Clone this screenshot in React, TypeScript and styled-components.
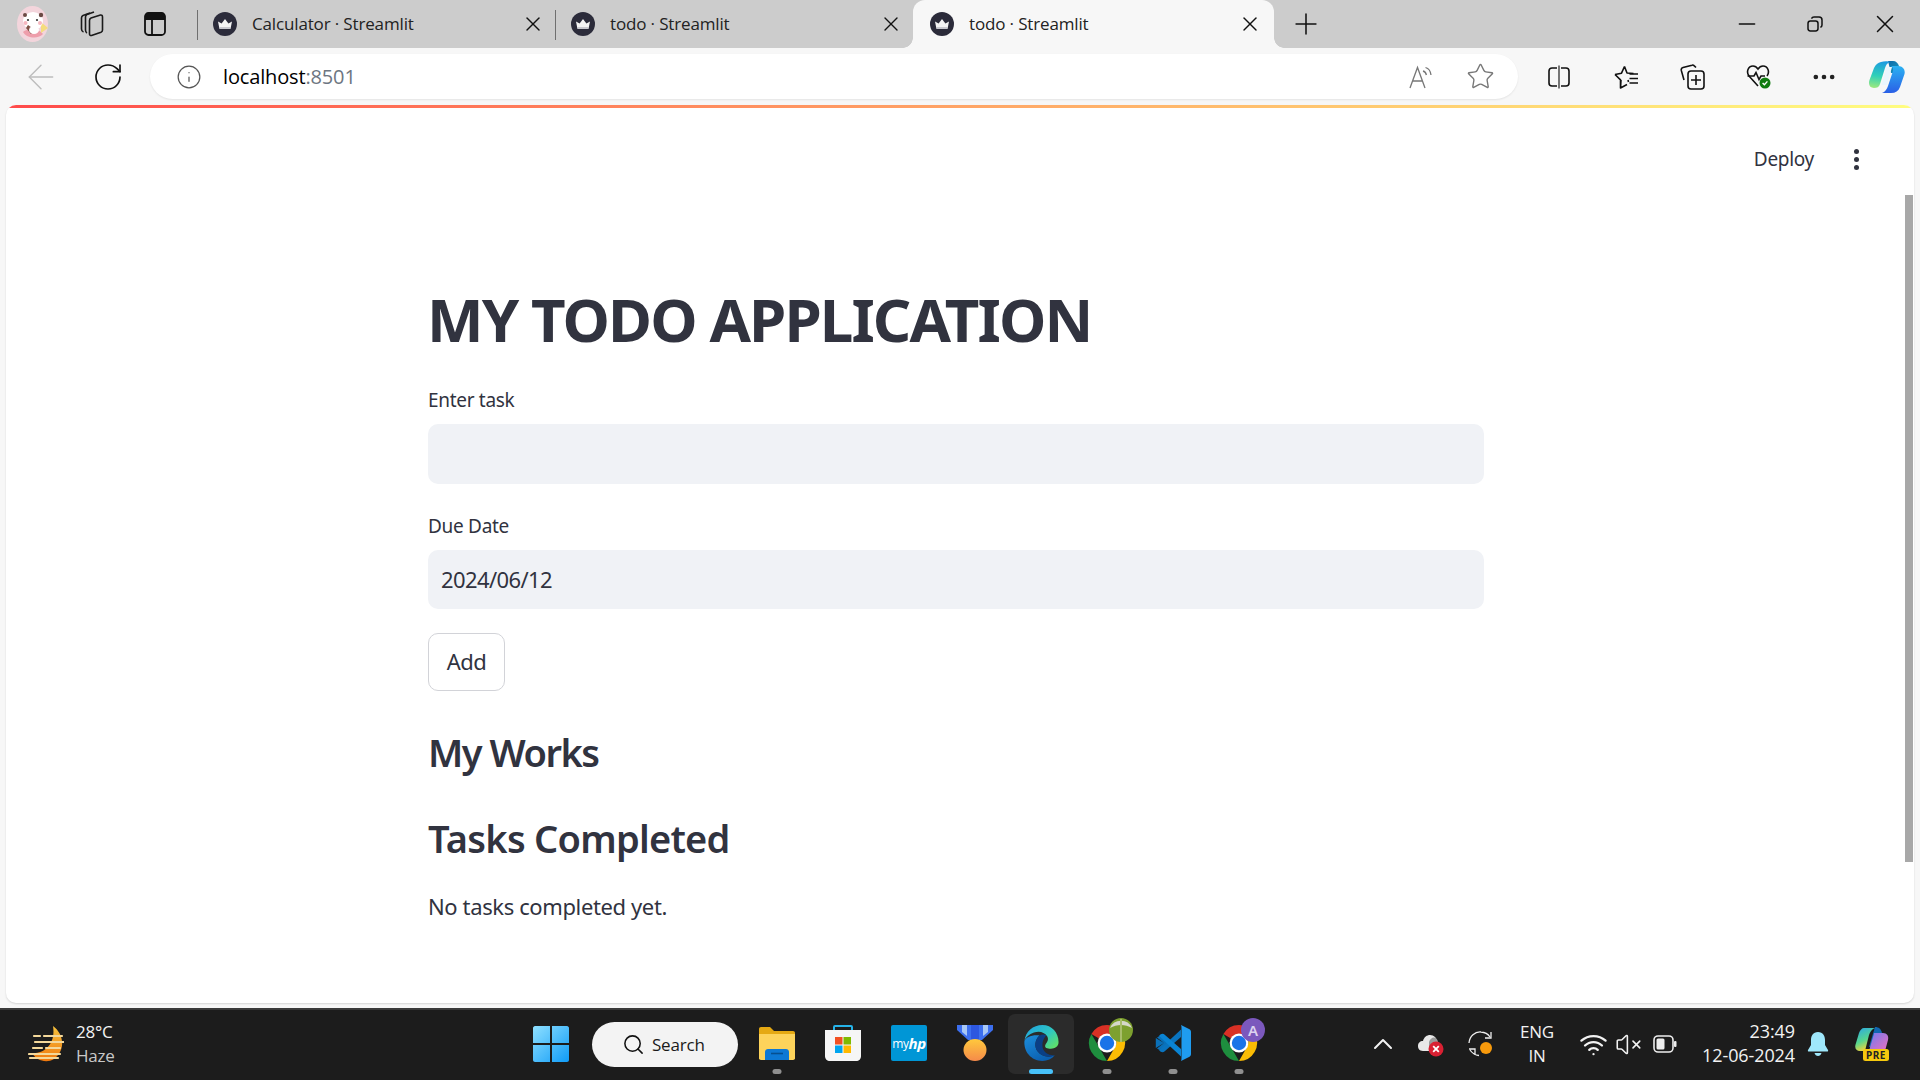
import React from 'react'
import styled, { createGlobalStyle } from 'styled-components'
import { ArrowLeft, ChevronUp, Info, Minus, MoreHorizontal, Plus, RotateCw, Search, Star, VolumeX, Wifi, X } from 'lucide-react'

const GlobalStyle = createGlobalStyle`
  html, body {
    margin: 0;
    padding: 0;
    overflow: hidden;
    background: #f7f7f7;
  }
  * {
    box-sizing: border-box;
  }
`

const StreamlitFavicon = () => (
  <svg width="24" height="24" viewBox="0 0 24 24">
    <circle cx="12" cy="12" r="12" fill="#2b2b3a" />
    <path d="M5 9.5 L8.6 11.6 L12 7 L15.4 11.6 L19 9.5 L17.6 16.5 H6.4 Z" fill="#f4f4f4" />
    <path d="M6.2 15 H17.8 L17.5 17 H6.5 Z" fill="#c9c9cf" />
  </svg>
)

const Avatar = () => (
  <svg width="31" height="36" viewBox="0 0 31 36">
    <ellipse cx="15.5" cy="18" rx="15.5" ry="18" fill="#f3d5dc" />
    <path d="M6 26 C10 22 22 22 26 28 C22 33 10 33 6 26Z" fill="#ee9eab" />
    <path d="M24 16 L31 22 L24 27Z" fill="#f5dc7d" />
    <ellipse cx="16" cy="15" rx="10" ry="9" fill="#fff" />
    <circle cx="24" cy="9" r="2.2" fill="#6b4a44" />
    <circle cx="8" cy="9" r="2" fill="#6b4a44" />
    <circle cx="11" cy="14" r="1.1" fill="#333" />
    <circle cx="20" cy="14" r="1.1" fill="#333" />
    <circle cx="8.5" cy="17" r="2" fill="#f7b7c0" />
    <circle cx="23" cy="17" r="2" fill="#f7b7c0" />
    <path d="M11 19 L18 24 L14 28 L9 22Z" fill="#7e4f44" />
    <ellipse cx="17" cy="24" rx="5" ry="4" fill="#fff" />
  </svg>
)

const WorkspacesIcon = () => (
  <svg width="24" height="28" viewBox="0 0 24 28" fill="none" stroke="#1a1a1a" strokeWidth="1.6" strokeLinejoin="round">
    <path d="M10 3 L3 5.5 C1.8 6 1.5 7 1.5 8 V19 C1.5 20.5 2 21.5 3.5 22" />
    <path d="M14 2 L7 4.5 C5.8 5 5.5 6 5.5 7 V20 C5.5 21.5 6 22.5 7 23" />
    <path d="M11 8 L20.5 5 C21.8 4.8 22.5 5.5 22.5 7 V20 C22.5 21 22 21.8 21 22.2 L11.5 25.5 C10.2 25.8 9.5 25 9.5 24 V10.5 C9.5 9.3 10 8.4 11 8Z" />
  </svg>
)

const TabLayoutIcon = () => (
  <svg width="22" height="24" viewBox="0 0 22 24">
    <rect x="1" y="1" width="20" height="22" rx="3.5" fill="none" stroke="#111" strokeWidth="1.8" />
    <path d="M1 4.5 C1 2.5 2.5 1 4.5 1 H17.5 C19.5 1 21 2.5 21 4.5 V8 H1Z" fill="#111" />
    <path d="M8 8 V23" stroke="#111" strokeWidth="1.8" />
  </svg>
)

const RestoreIcon = () => (
  <svg width="16" height="16" viewBox="0 0 16 16" fill="none" stroke="#111" strokeWidth="1.5">
    <rect x="1" y="5" width="10" height="10" rx="2.4" />
    <path d="M4.5 2.6 C5 1.5 5.8 1 7 1 H12 C13.8 1 15 2.2 15 4 V9 C15 10.2 14.4 11 13.4 11.4" />
  </svg>
)

const ReadAloudIcon = () => (
  <svg width="24" height="24" viewBox="0 0 24 24" fill="none" stroke="#777" strokeWidth="1.3">
    <path d="M1 23 L8.5 2.5 L16 23 M3.8 16 H13.2" />
    <path d="M14 6 C16 6.5 17 8 17.4 10 M16.5 2.5 C20 3.5 21.6 6.5 22 10" />
  </svg>
)

const SplitIcon = () => (
  <svg width="24" height="24" viewBox="0 0 24 24" fill="none" stroke="#111" strokeWidth="1.6">
    <path d="M10 3 H5 C3.2 3 2 4.2 2 6 V18 C2 19.8 3.2 21 5 21 H10" />
    <path d="M14 3 H19 C20.8 3 22 4.2 22 6 V18 C22 19.8 20.8 21 19 21 H14" />
    <path d="M12 0.5 V23.5" stroke="#555" />
  </svg>
)

const FavoritesIcon = () => (
  <svg width="25" height="24" viewBox="0 0 25 24" fill="none" stroke="#111" strokeWidth="1.6" strokeLinejoin="round">
    <path d="M10.5 1.5 L13 8 L19.5 8.5 M14 15 L14.5 17 M7 15 L6.5 23 L13 19.5 M1 9.5 L7.5 8.2 L10.5 1.5 M1 9.5 L6.5 14.8 L6.5 23" />
    <path d="M15.5 9 H24 M15.5 13.5 H24 M15.5 18 H24" />
  </svg>
)

const CollectionsIcon = () => (
  <svg width="25" height="26" viewBox="0 0 25 26" fill="none" stroke="#111" strokeWidth="1.6">
    <path d="M16 3.5 L14 1.6 C13.4 1 12.6 1 12 1.2 L3 3.6 C1.6 4 1 5 1.3 6.4 L4 16" />
    <rect x="8" y="7" width="16" height="18" rx="3" />
    <path d="M16 11 V21 M11 16 H21" />
  </svg>
)

const HealthIcon = () => (
  <svg width="26" height="26" viewBox="0 0 26 26">
    <path d="M12 22 L3 12 C0 8 2 2 7 2 C9.5 2 11 3.5 12 5 C13 3.5 14.5 2 17 2 C22 2 24 8 21 12" fill="none" stroke="#111" strokeWidth="1.6" />
    <path d="M1.5 12 H8 L10 8.5 L13 15.5 L15 12 H19" fill="none" stroke="#111" strokeWidth="1.6" />
    <circle cx="19" cy="19" r="5.5" fill="#107c10" />
    <path d="M16.6 19 L18.4 20.8 L21.4 17.4" fill="none" stroke="#fff" strokeWidth="1.4" />
  </svg>
)

const CopilotLogo = () => (
  <svg width="36" height="32" viewBox="0 0 36 32">
    <defs>
      <linearGradient id="copilotLeft" x1="0.5" y1="0" x2="0.4" y2="1">
        <stop offset="0" stopColor="#1c9be0" />
        <stop offset="0.55" stopColor="#2fd0b8" />
        <stop offset="1" stopColor="#9be87e" />
      </linearGradient>
      <linearGradient id="copilotRight" x1="0.5" y1="0" x2="0.5" y2="1">
        <stop offset="0" stopColor="#2bb2f2" />
        <stop offset="1" stopColor="#2a5fe6" />
      </linearGradient>
      <linearGradient id="copilotTop" x1="0" y1="0" x2="1" y2="1">
        <stop offset="0" stopColor="#0d6aa8" />
        <stop offset="1" stopColor="#1d9fc4" />
      </linearGradient>
    </defs>
    <path d="M19 0 H24 C27 0 29 2 30 5 L33 12 H22Z" fill="url(#copilotTop)" />
    <path d="M12 1 C15 0 19 0 21 1 C18 2 17 4 16 7 L11 23 C10 26 8 27 5 27 C1 27 -1 24 0.5 19 L5 7 C6.5 3.5 9 2 12 1Z" fill="url(#copilotLeft)" />
    <path d="M22 5 H29 C34 5 36.5 9 35.5 13 L31 26 C29.5 30 26.5 32 22 32 H13 C16 31 18 28 19 25 L24 10 C24.5 8 23.5 6 22 5Z" fill="url(#copilotRight)" />
    <path d="M17.5 6 H23 L18 24 H12.5Z" fill="#eaf6fd" />
  </svg>
)

const WeatherIcon = () => (
  <svg width="36" height="36" viewBox="0 0 36 36">
    <defs>
      <linearGradient id="weatherFill" x1="0" y1="0" x2="0" y2="1">
        <stop offset="0" stopColor="#f8c33c" />
        <stop offset="1" stopColor="#f0780d" />
      </linearGradient>
    </defs>
    <path d="M25 0 C36 8 38 24 26 33 C18 38 8 34 4 27 C16 28 28 18 25 0Z" fill="url(#weatherFill)" />
    <path d="M6 10 H12 M16 10 H34 M7 16 H36 M5 22 H14 M18 22 H32 M1 28 H32 M2 32 H30" stroke="#f4d89a" strokeWidth="2.2" strokeLinecap="round" />
  </svg>
)

const WindowsLogo = () => (
  <svg width="36" height="36" viewBox="0 0 36 36">
    <defs>
      <linearGradient id="winFill" x1="0" y1="0" x2="1" y2="1">
        <stop offset="0" stopColor="#8fe0ff" />
        <stop offset="1" stopColor="#0f9bf7" />
      </linearGradient>
    </defs>
    <path d="M0 2 C0 1 1 0 2 0 H17 V17 H0Z M19 0 H34 C35 0 36 1 36 2 V17 H19Z M0 19 H17 V36 H2 C1 36 0 35 0 34Z M19 19 H36 V34 C36 35 35 36 34 36 H19Z" fill="url(#winFill)" />
  </svg>
)

const FolderIcon = () => (
  <svg width="36" height="36" viewBox="0 0 36 36">
    <path d="M0 4 C0 2.8 .8 2 2 2 H11 L15 6 H34 C35.2 6 36 6.8 36 8 V34 H0Z" fill="#e5a913" />
    <path d="M0 9 H36 V33 C36 34.2 35.2 35 34 35 H2 C.8 35 0 34.2 0 33Z" fill="#fdd35b" />
    <path d="M6 35 V27 C6 25 7.5 24 9 24 H27 C28.5 24 30 25 30 27 V35Z" fill="#0d78d4" />
    <path d="M12 28.5 H24" stroke="#064f8f" strokeWidth="1.6" />
  </svg>
)

const StoreIcon = () => (
  <svg width="36" height="36" viewBox="0 0 36 36">
    <path d="M9 6 V2 C9 1.4 9.6 1 10 1 H26 C26.4 1 27 1.4 27 2 V6" fill="none" stroke="#25b3e8" strokeWidth="2" />
    <path d="M0 5 H36 V31 C36 34 34 36 31 36 H5 C2 36 0 34 0 31Z" fill="#f6f6f6" />
    <rect x="10" y="12" width="7.5" height="7.5" fill="#f25022" />
    <rect x="18.5" y="12" width="7.5" height="7.5" fill="#7fba00" />
    <rect x="10" y="20.5" width="7.5" height="7.5" fill="#00a4ef" />
    <rect x="18.5" y="20.5" width="7.5" height="7.5" fill="#ffb900" />
  </svg>
)

const MedalIcon = () => (
  <svg width="36" height="36" viewBox="0 0 36 36">
    <defs>
      <linearGradient id="medalFill" x1="0" y1="0" x2="0" y2="1">
        <stop offset="0" stopColor="#ffc93c" />
        <stop offset="1" stopColor="#f58a4a" />
      </linearGradient>
    </defs>
    <path d="M0 0 H36 V5 L25 15 H11 L0 5Z" fill="#3c6fef" />
    <path d="M5 0 H10 V11 L5 7Z M26 0 H31 V7 L26 11Z" fill="#a9c8f6" />
    <path d="M14 0 H22 V15 H14Z" fill="#2d57e0" />
    <ellipse cx="18" cy="25" rx="11.5" ry="11" fill="url(#medalFill)" />
  </svg>
)

const EdgeLogo = () => (
  <svg width="37" height="36" viewBox="0 0 38 38">
    <defs>
      <linearGradient id="edgeTop" x1="0" y1="0" x2="1" y2="0.8">
        <stop offset="0" stopColor="#1f9fe2" />
        <stop offset="0.6" stopColor="#2fc7c1" />
        <stop offset="1" stopColor="#5fe06a" />
      </linearGradient>
      <linearGradient id="edgeLow" x1="0" y1="0" x2="0.6" y2="1">
        <stop offset="0" stopColor="#1c8edc" />
        <stop offset="1" stopColor="#0b5fb0" />
      </linearGradient>
    </defs>
    <path d="M1 17 C2 7 10 0 20 0 C30 0 37 8 37 18 C37 23 33 25 29 25 C25 25 22 24 23 21 C25 18 27 16 25 12 C22 7 16 6 11 8 C6 10 2 13 1 17Z" fill="url(#edgeTop)" />
    <path d="M1 17 C0 28 8 38 20 38 C25 38 30 36 33 32 C26 35 19 33 15 28 C11 23 12 15 17 11 C9 10 2 13 1 17Z" fill="url(#edgeLow)" />
    <path d="M17 11 C12 15 11 23 15 28 C19 33 26 35 33 32 C28 32 23 30 21 26 C19 21 20 15 24 11 C22 9.5 19 10 17 11Z" fill="#0a3f86" />
  </svg>
)

const ChromeLogo = ({ badge }: { badge: 'photo' | 'letter' }) => (
  <svg width="36" height="36" viewBox="0 0 36 36" style={{ overflow: 'visible' }}>
    <path d="M18 0 A18 18 0 0 1 33.6 9 L18 9 A9 9 0 0 0 10 13.5 L2.4 9 A18 18 0 0 1 18 0Z" fill="#d93025" />
    <path d="M2.4 9 L10.2 22.5 L18 36 A18 18 0 0 1 2.4 9Z" fill="#1e8e3e" />
    <path d="M33.6 9 A18 18 0 0 1 18 36 L26 22 A9 9 0 0 0 26 13 L18 9Z" fill="#fbbc04" />
    <circle cx="18" cy="18" r="9.4" fill="#fff" />
    <circle cx="18" cy="18" r="7.2" fill="#1a73e8" />
    {badge === 'photo' ? (
      <g>
        <circle cx="32" cy="5" r="12" fill="#7da02f" />
        <path d="M21 3 A12 12 0 0 1 43 3 C36 -1 28 -1 21 3Z" fill="#d6d8c9" />
        <path d="M31 -6 H33 V17 H31Z" fill="#a9bd6c" />
      </g>
    ) : (
      <g>
        <circle cx="32" cy="5" r="12" fill="#7b58bd" />
        <text x="32" y="10.5" fontSize="15" fontFamily="'Noto Sans', sans-serif" fontWeight="600" fill="#dcd2f0" textAnchor="middle">A</text>
      </g>
    )}
  </svg>
)

const VsCodeLogo = () => (
  <svg width="36" height="36" viewBox="0 0 36 36">
    <path d="M2 12.5 L4.5 11 L13 18 L4.5 25 L2 23.5 L9 18Z M0.8 13 L9 18 L0.8 23Z" fill="#0a70b8" />
    <path d="M4 25 L26 4.5 L26 12 L10 26 C8 28 6 27.5 4 25Z" fill="#0a74bf" />
    <path d="M4 11 C6 8.5 8 8 10 10 L26 24 L26 31.5Z" fill="#0a84d4" />
    <path d="M26 0 L34 4 C35.4 4.8 36 5.6 36 7 V29 C36 30.4 35.4 31.2 34 32 L26 36 C26.5 35 26.5 34 26.5 33 V3 C26.5 2 26.5 1 26 0Z" fill="#1f9cf0" />
  </svg>
)

const CloudIcon = () => (
  <svg width="26" height="26" viewBox="0 0 26 26">
    <path d="M5 20 C1 20 0 17 0 15 C0 12 2 10 5 10 C6 6 9 4 12 4 C16 4 19 7 19 11 H14 V20Z" fill="#e8e8e8" />
    <path d="M11 20 V11 C13 5 19 5 20 11 V20Z" fill="#9a9a9a" />
    <circle cx="18" cy="18" r="7.5" fill="#d92032" />
    <path d="M15.2 15.2 L20.8 20.8 M20.8 15.2 L15.2 20.8" stroke="#fff" strokeWidth="1.8" />
  </svg>
)

const SyncIcon = () => (
  <svg width="26" height="26" viewBox="0 0 26 26" fill="none" stroke="#eee" strokeWidth="1.3">
    <path d="M1 12 C1.5 5 7 0.5 13 1 C17 1.2 20 3 22 6" />
    <path d="M23 1 V7 H17" />
    <path d="M1 18 H7 V24 M2 19 C4 22 7 24 11 24.5" />
    <circle cx="18" cy="17" r="6" fill="#f79a0c" stroke="none" />
  </svg>
)

const BatteryIcon = () => (
  <svg width="24" height="18" viewBox="0 0 24 18">
    <rect x="1" y="1" width="19" height="16" rx="4" fill="none" stroke="#eee" strokeWidth="1.6" />
    <rect x="3.5" y="3.5" width="8" height="11" rx="1.5" fill="#eee" />
    <rect x="21" y="6" width="2.5" height="6" rx="1" fill="#eee" />
  </svg>
)

const BellIcon = () => (
  <svg width="22" height="24" viewBox="0 0 22 24" fill="#9fe7fb">
    <path d="M11 0 C16 0 18 4 18 8 V13 L21 18 C21.4 19 21 19.5 20 19.5 H2 C1 19.5 .6 19 1 18 L4 13 V8 C4 4 6 0 11 0Z" />
    <path d="M7.5 21 H14.5 C14 23 12.6 24 11 24 C9.4 24 8 23 7.5 21Z" />
  </svg>
)

const CopilotPreIcon = () => (
  <svg width="34" height="34" viewBox="0 0 34 34">
    <defs>
      <linearGradient id="preLeft" x1="0" y1="0" x2="0.4" y2="1">
        <stop offset="0" stopColor="#2aa7e8" />
        <stop offset="0.6" stopColor="#56d68f" />
        <stop offset="1" stopColor="#f3d43a" />
      </linearGradient>
      <linearGradient id="preRight" x1="0" y1="0" x2="1" y2="1">
        <stop offset="0" stopColor="#6f7bee" />
        <stop offset="1" stopColor="#ee6fc0" />
      </linearGradient>
    </defs>
    <path d="M20 0 C24 0 26 2 27 6 L30 20 H14Z" fill="#1167b1" />
    <path d="M9 1 H20 C17 2 15 5 14 8 L10 24 H5 C1 24 -1 21 1 16 L4 6 C5 3 7 1 9 1Z" fill="url(#preLeft)" />
    <path d="M19 6 H28 C32 6 34 9 33 13 L30 24 H14 L18 10 C18.5 8 19 7 19 6Z" fill="url(#preRight)" />
    <rect x="8" y="22" width="26" height="12" rx="2.5" fill="#f6c90e" />
    <text x="21" y="31.8" fontSize="10" fontWeight="700" fontFamily="'Noto Sans', sans-serif" fill="#222" textAnchor="middle" letterSpacing="0.5">PRE</text>
  </svg>
)

const BrowserTab = ({ title, active }: { title: string; active?: boolean }) => (
  <Tab $active={active}>
    <StreamlitFavicon />
    <TabTitle>{title}</TabTitle>
    <TabClose>
      <X size={24} strokeWidth={1.4} />
    </TabClose>
  </Tab>
)

const App = () => {
  return (
    <Screen>
      <GlobalStyle />
      <TabStrip>
        <StripIcon $ml={17}>
          <Avatar />
        </StripIcon>
        <StripIcon $ml={32}>
          <WorkspacesIcon />
        </StripIcon>
        <StripIcon $ml={40}>
          <TabLayoutIcon />
        </StripIcon>
        <Tabs>
          <BrowserTab title="Calculator · Streamlit" />
          <BrowserTab title="todo · Streamlit" />
          <BrowserTab title="todo · Streamlit" active />
        </Tabs>
        <StripIcon $ml={15}>
          <Plus size={34} strokeWidth={1.1} color="#111" />
        </StripIcon>
        <WindowControls>
          <Minus size={26} strokeWidth={1.5} color="#111" />
          <RestoreIcon />
          <X size={30} strokeWidth={1.2} color="#111" />
        </WindowControls>
      </TabStrip>

      <Toolbar>
        <ToolIcon $ml={21}>
          <ArrowLeft size={40} strokeWidth={0.85} color="#bdbdbd" />
        </ToolIcon>
        <ToolIcon $ml={31}>
          <RotateCw size={32} strokeWidth={1.25} color="#111" />
        </ToolIcon>
        <AddressBar>
          <Info size={26} strokeWidth={1.15} color="#555" />
          <AddressText>
            localhost<AddressPort>:8501</AddressPort>
          </AddressText>
          <AddressActions>
            <ReadAloudIcon />
            <Star size={29} strokeWidth={1.15} color="#777" />
          </AddressActions>
        </AddressBar>
        <ToolIcon $ml={29}>
          <SplitIcon />
        </ToolIcon>
        <ToolIcon $ml={43}>
          <FavoritesIcon />
        </ToolIcon>
        <ToolIcon $ml={41}>
          <CollectionsIcon />
        </ToolIcon>
        <ToolIcon $ml={41}>
          <HealthIcon />
        </ToolIcon>
        <ToolIcon $ml={38}>
          <MoreHorizontal size={28} strokeWidth={2} color="#222" />
        </ToolIcon>
        <ToolIcon $ml={31}>
          <CopilotLogo />
        </ToolIcon>
      </Toolbar>

      <Page>
        <Decoration />
        <PageHeader>
          <DeployLabel>Deploy</DeployLabel>
          <KebabDots>
            <span />
            <span />
            <span />
          </KebabDots>
        </PageHeader>
        <Scrollbar />
        <Content>
          <Title>MY TODO APPLICATION</Title>
          <FieldLabel>Enter task</FieldLabel>
          <TextField $height={60} />
          <FieldLabel $gap={30}>Due Date</FieldLabel>
          <TextField $height={59} value="2024/06/12" readOnly />
          <AddButton>Add</AddButton>
          <SectionHeading $gap={36} $tracking={-1.5}>My Works</SectionHeading>
          <SectionHeading $gap={36} $tracking={-0.75}>Tasks Completed</SectionHeading>
          <BodyText>No tasks completed yet.</BodyText>
        </Content>
      </Page>

      <Taskbar>
        <Weather>
          <WeatherIcon />
          <WeatherText>
            <span>28°C</span>
            <WeatherSub>Haze</WeatherSub>
          </WeatherText>
        </Weather>
        <WindowsLogo />
        <SearchPill>
          <Search size={23} strokeWidth={1.6} color="#111" />
          <span>Search</span>
        </SearchPill>
        <PinnedApps>
          <PinnedApp $running>
            <FolderIcon />
          </PinnedApp>
          <PinnedApp>
            <StoreIcon />
          </PinnedApp>
          <PinnedApp>
            <MyHpTile>
              my<MyHpMark>hp</MyHpMark>
            </MyHpTile>
          </PinnedApp>
          <PinnedApp>
            <MedalIcon />
          </PinnedApp>
          <PinnedApp $active>
            <EdgeLogo />
          </PinnedApp>
          <PinnedApp $running>
            <ChromeLogo badge="photo" />
          </PinnedApp>
          <PinnedApp $running>
            <VsCodeLogo />
          </PinnedApp>
          <PinnedApp $running>
            <ChromeLogo badge="letter" />
          </PinnedApp>
        </PinnedApps>
        <TrayItem $ml={101} $w={20}>
          <ChevronUp size={32} strokeWidth={1.5} color="#f2f2f2" />
        </TrayItem>
        <TrayItem $ml={25} $w={26}>
          <CloudIcon />
        </TrayItem>
        <TrayItem $ml={24} $w={26}>
          <SyncIcon />
        </TrayItem>
        <LanguageBlock>
          <span>ENG</span>
          <span>IN</span>
        </LanguageBlock>
        <TrayItem $ml={24} $w={24}>
          <Wifi size={29} strokeWidth={1.9} color="#f2f2f2" />
        </TrayItem>
        <TrayItem $ml={11} $w={24}>
          <VolumeX size={27} strokeWidth={1.4} color="#f2f2f2" />
        </TrayItem>
        <TrayItem $ml={13} $w={24}>
          <BatteryIcon />
        </TrayItem>
        <Clock>
          <span>23:49</span>
          <span>12-06-2024</span>
        </Clock>
        <TrayItem $ml={12} $w={22}>
          <BellIcon />
        </TrayItem>
        <TrayItem $ml={26} $w={34}>
          <CopilotPreIcon />
        </TrayItem>
      </Taskbar>
    </Screen>
  )
}

export default App

const uiFont = `'Open Sans', 'Noto Sans', sans-serif`
const pageFont = `'Noto Sans', 'Open Sans', sans-serif`

const Screen = styled.div`
  width: 1920px;
  height: 1080px;
  display: flex;
  flex-direction: column;
  background: #f7f7f7;
  overflow: hidden;
`

const TabStrip = styled.div`
  height: 48px;
  flex: none;
  display: flex;
  align-items: center;
  background: #cccccc;
`

const StripIcon = styled.div<{ $ml: number }>`
  margin-left: ${({ $ml }) => $ml}px;
  display: flex;
  align-items: center;
  justify-content: center;
  flex: none;
`

const Tabs = styled.div`
  margin-left: 31px;
  height: 48px;
  display: flex;
`

const Tab = styled.div<{ $active?: boolean }>`
  width: ${({ $active }) => ($active ? '361px' : '358px')};
  height: 48px;
  display: flex;
  align-items: center;
  padding: 0 ${({ $active }) => ($active ? '12px' : '10px')} 0 ${({ $active }) => ($active ? '17px' : '16px')};
  background: ${({ $active }) => ($active ? '#f7f7f7' : 'transparent')};
  border-radius: ${({ $active }) => ($active ? '12px 12px 0 0' : '0')};
  position: relative;

  &::before {
    content: '';
    position: absolute;
    left: ${({ $active }) => ($active ? '-10px' : '0')};
    ${({ $active }) => ($active ? 'bottom: 0;' : 'top: 10px;')}
    width: ${({ $active }) => ($active ? '10px' : '1px')};
    height: ${({ $active }) => ($active ? '10px' : '30px')};
    background: ${({ $active }) =>
      $active ? 'radial-gradient(circle at 0 0, transparent 9.5px, #f7f7f7 10px)' : '#6f6f6f'};
  }

  &::after {
    content: '';
    display: ${({ $active }) => ($active ? 'block' : 'none')};
    position: absolute;
    right: -10px;
    bottom: 0;
    width: 10px;
    height: 10px;
    background: radial-gradient(circle at 100% 0, transparent 9.5px, #f7f7f7 10px);
  }
`

const TabTitle = styled.span`
  margin: 0 0 2px 15px;
  font: 400 17px ${uiFont};
  letter-spacing: -0.15px;
  color: #222;
  white-space: nowrap;
`

const TabClose = styled.span`
  margin-left: auto;
  display: flex;
  color: #111;
`

const WindowControls = styled.div`
  margin-left: auto;
  width: 186px;
  padding-right: 20px;
  display: flex;
  align-items: center;
  justify-content: space-between;
`

const Toolbar = styled.div`
  height: 57px;
  flex: none;
  display: flex;
  align-items: center;
  background: #f7f7f7;
`

const ToolIcon = styled.div<{ $ml: number }>`
  margin-left: ${({ $ml }) => $ml}px;
  display: flex;
  flex: none;
`

const AddressBar = styled.div`
  margin-left: 26px;
  width: 1368px;
  height: 45px;
  flex: none;
  display: flex;
  align-items: center;
  padding: 0 23px 0 26px;
  background: #ffffff;
  border-radius: 23px;
  box-shadow: 0 1px 2px rgba(0, 0, 0, 0.08);
`

const AddressText = styled.div`
  margin-left: 21px;
  font: 400 20px ${uiFont};
  letter-spacing: -0.15px;
  color: #000;
`

const AddressPort = styled.span`
  color: #6d7681;
`

const AddressActions = styled.div`
  margin-left: auto;
  display: flex;
  align-items: center;
  gap: 33px;
`

const Page = styled.div`
  position: relative;
  width: 1908px;
  height: 898px;
  flex: none;
  margin-left: 6px;
  background: #ffffff;
  border-radius: 10px;
  box-shadow: 0 1px 2px rgba(0, 0, 0, 0.14);
  overflow: hidden;
`

const Decoration = styled.div`
  height: 3px;
  background: linear-gradient(90deg, #ff4b4b, #fffd80);
`

const PageHeader = styled.div`
  height: 102px;
  display: flex;
  align-items: center;
  justify-content: flex-end;
  padding-right: 55px;
`

const DeployLabel = styled.span`
  font: 400 19px ${pageFont};
  letter-spacing: -0.3px;
  color: #31333f;
`

const KebabDots = styled.span`
  margin-left: 40px;
  display: flex;
  flex-direction: column;
  gap: 3px;

  span {
    width: 5px;
    height: 5px;
    border-radius: 50%;
    background: #31333f;
  }
`

const Scrollbar = styled.div`
  position: absolute;
  top: 90px;
  right: 1px;
  width: 8px;
  height: 667px;
  background: #a8a8a8;
`

const Content = styled.div`
  margin-left: 422px;
  width: 1056px;
  display: flex;
  flex-direction: column;
  align-items: flex-start;
`

const Title = styled.h1`
  margin: 69px 0 0 -1px;
  font: 700 60px/80px ${pageFont};
  letter-spacing: -1.9px;
  color: #31333f;
  white-space: nowrap;
`

const FieldLabel = styled.label<{ $gap?: number }>`
  margin-top: ${({ $gap }) => $gap ?? 29}px;
  font: 400 19px/24px ${pageFont};
  letter-spacing: -0.3px;
  color: #31333f;
`

const TextField = styled.input<{ $height: number }>`
  display: block;
  margin-top: 12px;
  width: 100%;
  height: ${({ $height }) => $height}px;
  padding: 0 13px 2px;
  border: none;
  outline: none;
  border-radius: 10px;
  background: #f0f2f6;
  font: 400 22px ${pageFont};
  letter-spacing: -0.6px;
  color: #31333f;
`

const AddButton = styled.button`
  margin-top: 24px;
  width: 77px;
  height: 58px;
  padding: 0 0 2px;
  background: #ffffff;
  border: 1px solid #d2d3d8;
  border-radius: 10px;
  font: 400 22px ${pageFont};
  letter-spacing: -0.5px;
  color: #31333f;
`

const SectionHeading = styled.h2<{ $gap: number; $tracking: number }>`
  margin: ${({ $gap }) => $gap}px 0 0;
  font: 600 38px/50px ${pageFont};
  letter-spacing: ${({ $tracking }) => $tracking}px;
  color: #31333f;
  white-space: nowrap;
`

const BodyText = styled.p`
  margin: 28px 0 0;
  font: 400 22px/30px ${pageFont};
  letter-spacing: -0.38px;
  color: #31333f;
`

const Taskbar = styled.div`
  margin-top: 5px;
  height: 72px;
  flex: none;
  display: flex;
  align-items: center;
  padding-bottom: 2px;
  background: #1c1c1c;
  border-top: 2px solid #3a3a3a;
`

const Weather = styled.div`
  margin-left: 28px;
  width: 505px;
  flex: none;
  display: flex;
  align-items: center;
  gap: 12px;
`

const WeatherText = styled.div`
  display: flex;
  flex-direction: column;
  gap: 3px;
  margin-bottom: 1px;
  font: 400 17px/21px ${uiFont};
  letter-spacing: -0.2px;
  color: #f2f2f2;
`

const WeatherSub = styled.span`
  color: #c8c8c8;
`

const SearchPill = styled.div`
  margin-left: 23px;
  width: 146px;
  height: 45px;
  flex: none;
  display: flex;
  align-items: center;
  padding-left: 30px;
  gap: 7px;
  background: #f3f3f3;
  border-radius: 23px;
  font: 400 17px ${uiFont};
  letter-spacing: -0.2px;
  color: #1a1a1a;
`

const PinnedApps = styled.div`
  margin-left: 6px;
  display: flex;
`

const PinnedApp = styled.div<{ $active?: boolean; $running?: boolean }>`
  position: relative;
  width: 66px;
  height: 60px;
  display: flex;
  align-items: center;
  justify-content: center;
  padding-bottom: 2px;
  border-radius: 7px;
  background: ${({ $active }) => ($active ? '#2b2b2b' : 'transparent')};

  &::after {
    content: '';
    position: absolute;
    display: ${({ $active, $running }) => ($active || $running ? 'block' : 'none')};
    left: 50%;
    bottom: 0;
    width: ${({ $active }) => ($active ? '24px' : '9px')};
    height: 5px;
    transform: translateX(-50%);
    border-radius: 3px;
    background: ${({ $active }) => ($active ? '#47c1f9' : '#8f8f8f')};
  }
`

const MyHpTile = styled.div`
  width: 36px;
  height: 36px;
  display: flex;
  align-items: center;
  justify-content: center;
  border-radius: 2px;
  background: #0096d6;
  font: 400 12px ${uiFont};
  letter-spacing: -0.4px;
  color: #fff;
`

const MyHpMark = styled.span`
  font-weight: 700;
  font-style: italic;
  font-size: 15px;
`

const TrayItem = styled.div<{ $ml: number; $w: number }>`
  margin-left: ${({ $ml }) => $ml}px;
  width: ${({ $w }) => $w}px;
  flex: none;
  display: flex;
  align-items: center;
  justify-content: center;

  svg {
    flex: none;
  }
`

const LanguageBlock = styled.div`
  margin-left: 23px;
  width: 40px;
  flex: none;
  display: flex;
  flex-direction: column;
  align-items: center;
  gap: 3px;
  margin-bottom: 1px;
  font: 400 17px/21px ${uiFont};
  letter-spacing: -0.2px;
  color: #f2f2f2;
`

const Clock = styled.div`
  margin-left: 18px;
  width: 100px;
  flex: none;
  display: flex;
  flex-direction: column;
  align-items: flex-end;
  gap: 3px;
  margin-bottom: 1px;
  font: 400 18px/21px ${uiFont};
  letter-spacing: -0.1px;
  color: #f2f2f2;
`
